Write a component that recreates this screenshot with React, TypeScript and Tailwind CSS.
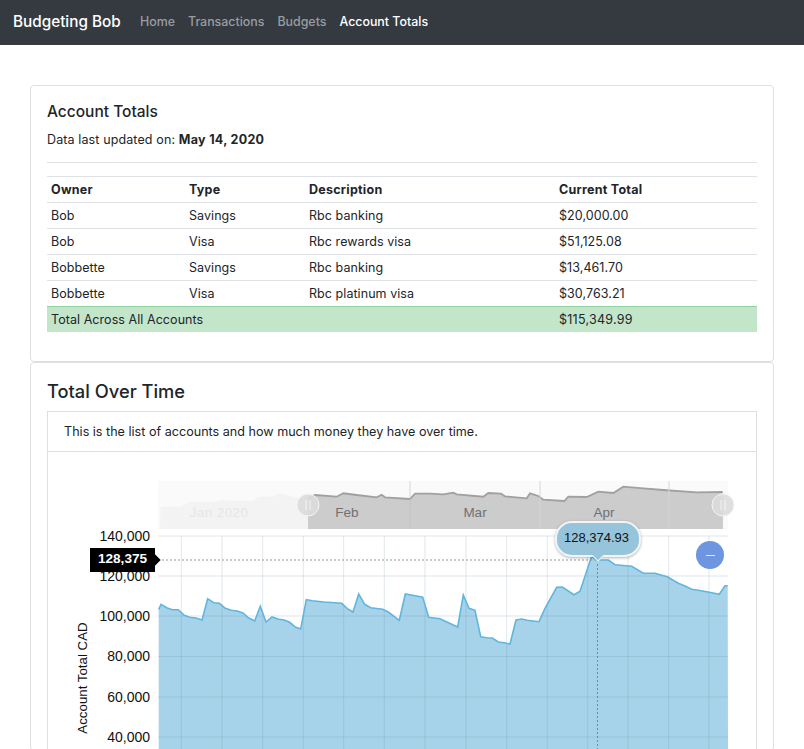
const font = "font-['Inter','Noto_Sans',sans-serif]";

const z2 = [[296,418],[303,403],[320,413],[337,419],[355,419],[373,436],[390,442],[408,444],[426,450],[443,386],[461,398],[478,400],[496,415],[514,421],[531,423],[549,429],[566,444],[584,453],[601,409],[618,456],[636,441],[654,447],[672,450],[689,457],[706,471],[722,477],[739,389],[757,392],[792,396],[845,400],[862,416],[879,426],[896,372],[914,403],[932,413],[968,418],[985,426],[1018,451],[1036,372],[1088,382],[1106,442]];
const z3 = [[30,446],[83,471],[100,375],[117,415],[135,421],[152,500],[170,503],[187,504],[205,516],[222,518],[240,522],[258,450],[275,447],[292,451],[327,455],[345,415],[380,352],[397,351],[432,374],[450,364],[485,258],[500,270],[535,270],[555,284],[605,289],[640,310],[675,310],[712,320],[745,340],[765,348],[785,358],[805,361],[830,365],[868,373],[885,347],[893,347]];
const m2 = [[302,110],[362,110],[390,95],[470,95],[490,87],[500,92],[580,92],[595,80],[640,80],[650,72],[670,72],[700,80],[740,88],[765,75],[830,80],[850,70],[890,75],[950,82],[965,74],[975,82],[1050,87],[1065,71],[1110,71]];
const m3 = [[40,73],[70,68],[80,73],[160,80],[175,69],[213,71],[225,79],[290,85],[300,70],[325,78],[340,89],[403,93],[415,80],[470,81],[505,65],[550,69],[580,50],[640,55],[700,60],[800,67],[878,66]];

const toPts = (a: number[][], b: number[][]) => [
  ...a.map(([x, y]) => [60 + x / 3, 470 + y / 3]),
  ...b.map(([x, y]) => [430 + x / 3, 470 + y / 3]),
];
const main = toPts(z2, z3);
const mini = toPts(m2, m3);
const line = (p: number[][]) => p.map(([x, y], i) => `${i ? "L" : "M"}${x.toFixed(1)} ${y.toFixed(1)}`).join(" ");
const mainLine = line(main);
const miniLine = line(mini);

const ys = [536, 576, 616, 656.5, 697, 737];
const labels = ["140,000", "120,000", "100,000", "80,000", "60,000", "40,000"];
const xs = [181.3, 222, 262.7, 303.3, 343.7, 384.3, 425, 466, 506.7, 547.3, 587.7, 628, 668.7, 709];

const rows = [
  ["Bob", "Savings", "Rbc banking", "$20,000.00"],
  ["Bob", "Visa", "Rbc rewards visa", "$51,125.08"],
  ["Bobbette", "Savings", "Rbc banking", "$13,461.70"],
  ["Bobbette", "Visa", "Rbc platinum visa", "$30,763.21"],
];

function Row({ cells, className }: { cells: string[]; className: string }) {
  return (
    <div className={`grid grid-cols-[138px_120px_250px_1fr] h-[26px] items-center px-1 pt-px ${className}`}>
      {cells.map((c, i) => (
        <div key={i}>{c}</div>
      ))}
    </div>
  );
}

function Handle({ x }: { x: number }) {
  return (
    <g>
      <circle cx={x} cy={505} r={11} fill="#dcdcdc" fillOpacity={0.9} stroke="#f4f4f4" strokeWidth={1} />
      <path d={`M${x - 2} 500V510M${x + 2} 500V510`} stroke="#f5f5f5" strokeWidth={1} />
    </g>
  );
}

function Chart() {
  return (
    <div className="relative h-[297px]">
      <svg viewBox="48 452 708 297" className="block w-[708px] h-[297px]">
        <g fontFamily="'Liberation Sans', sans-serif">
          <rect x={158} y={481} width={570} height={48} fill="#fafafa" />
          <path d={`${miniLine} L723 529 L160 529 Z`} fill="#f3f3f3" />
          <clipPath id="sel"><rect x={308} y={481} width={415} height={48} /></clipPath>
          <g clipPath="url(#sel)">
            <path d={`${miniLine} L723 529 L160 529 Z`} fill="#cccccc" />
            <path d={miniLine} fill="none" stroke="#a0a0a0" strokeWidth={1.8} />
            {[410, 540, 669].map((x) => <path key={x} d={`M${x} 481V529`} stroke="#bfbfbf" strokeOpacity={0.6} />)}
          </g>
          <path d="M540 481V529M669 481V529" stroke="#eeeeee" strokeOpacity={0.5} />
          <text x={219} y={517} fontSize={13.5} fill="#e6e6e6" textAnchor="middle" letterSpacing={0.4}>Jan 2020</text>
          <text x={347} y={517} fontSize={13.5} fill="#707070" textAnchor="middle">Feb</text>
          <text x={475} y={517} fontSize={13.5} fill="#707070" textAnchor="middle">Mar</text>
          <text x={604} y={517} fontSize={13.5} fill="#707070" textAnchor="middle">Apr</text>
          <Handle x={308} />
          <Handle x={723} />

          <path d={`${mainLine} L728 749 L158.7 749 Z`} fill="#a6d3ea" />
          <g stroke="#5a7f92" strokeOpacity={0.18}>
            {ys.map((y) => <path key={y} d={`M158 ${y}H728`} />)}
            {xs.map((x) => <path key={x} d={`M${x} 536V749`} />)}
          </g>
          <path d={mainLine} fill="none" stroke="#60b6de" strokeWidth={1.6} />
          <path d="M158 560H597.5" stroke="#999999" strokeDasharray="2 2" />
          <path d="M597.5 560V749" stroke="#6f8c9c" strokeDasharray="2 2" />
          {labels.map((l, i) => (
            <text key={l} x={150} y={ys[i] + 4.5} fontSize={14} fill="#111" textAnchor="end">{l}</text>
          ))}
          <text transform="translate(87 678) rotate(-90)" fontSize={13.3} fill="#111" textAnchor="middle">Account Total CAD</text>
        </g>
      </svg>
      <div className="absolute left-[42px] top-[96px] w-[65px] h-6 pb-[2px] bg-black text-white text-[13.6px] font-semibold flex items-center justify-center font-['Liberation_Sans',sans-serif]">
        128,375
        <div className="absolute right-[-4px] top-2 w-2 h-2 rotate-45 bg-black" />
      </div>
      <div className="absolute left-[507px] top-[69px] w-[86px] h-[36px] pb-[2px] pr-[3px] rounded-[17px] bg-[#96c4da] border-2 border-[#f1f5f7] shadow-[0_1px_3px_rgba(0,0,0,0.3)] text-[13px] text-[#111] flex items-center justify-center font-['Liberation_Sans',sans-serif]">
        128,374.93
        <div className="absolute left-[37px] bottom-[-5px] w-2 h-2 rotate-45 bg-[#96c4da] border-r border-b border-[#f1f5f7]" />
      </div>
      <div className="absolute left-[648px] top-[89px] w-7 h-7 rounded-full bg-[#6d95e0] flex items-center justify-center">
        <div className="w-[9px] h-px bg-[#dfe8fa]" />
      </div>
    </div>
  );
}

export default function App() {
  return (
    <div className={`h-screen overflow-hidden bg-white text-[#212529] ${font}`}>
      <nav className="h-[45px] bg-[#343a40] flex items-center pl-[13px]">
        <span className="text-[15.3px] text-white w-[127px] font-medium">Budgeting Bob</span>
        <div className="flex gap-[13px] text-[12.4px] font-medium">
          <span className="text-[#9a9da0]">Home</span>
          <span className="text-[#9a9da0]">Transactions</span>
          <span className="text-[#9a9da0]">Budgets</span>
          <span className="text-white">Account Totals</span>
        </div>
      </nav>
      <main className="px-[30px] pt-10">
        <section className="h-[277px] border border-[#dfdfdf] rounded px-4 pt-[15px]">
          <h2 className="text-[15.5px] leading-[22px] font-medium">Account Totals</h2>
          <p className="mt-[7px] text-[12.5px] leading-[20px] tracking-[0.12px]">
            Data last updated on: <b className="font-bold tracking-[0.3px]">May 14, 2020</b>
          </p>
          <div className="mt-[12px] border-t border-[#dee2e6]" />
          <div className="mt-[13px] border-t border-[#dee2e6] text-[12.5px] tracking-[0.06px]">
            <Row cells={["Owner", "Type", "Description", "Current Total"]} className="font-bold border-b border-[#dee2e6] tracking-[0.25px]" />
            {rows.map((r, i) => (
              <Row key={i} cells={r} className="border-b border-[#dee2e6]" />
            ))}
            <div className="grid grid-cols-[508px_1fr] h-[26px] items-center px-1 pt-px bg-[#c3e6cb] border-t border-t-[#8fd19e] -mt-px">
              <div>Total Across All Accounts</div>
              <div className="tracking-[0.25px]">$115,349.99</div>
            </div>
          </div>
        </section>
        <section className="border border-[#dfdfdf] rounded px-4 pt-[17px]">
          <h2 className="text-[18.3px] leading-[24px] font-medium -mt-[1px]">Total Over Time</h2>
          <div className="mt-[8px] border border-[#dfdfdf]">
            <div className="h-[40px] pt-[2px] border-b border-[#dfdfdf] pl-4 flex items-center text-[12.6px]">
              This is the list of accounts and how much money they have over time.
            </div>
            <Chart />
          </div>
        </section>
      </main>
    </div>
  );
}
